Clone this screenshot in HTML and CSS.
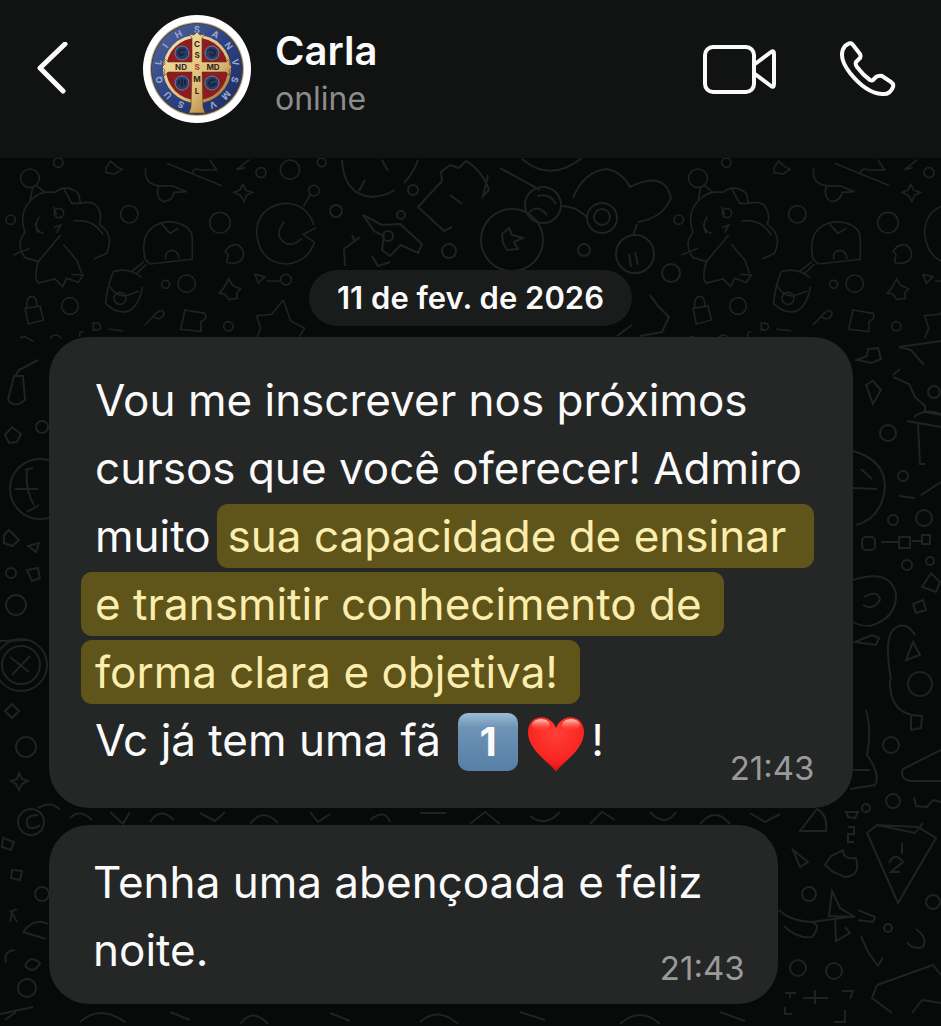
FILE: index.html
```
<!DOCTYPE html>
<html lang="pt-BR">

<head>
    <meta charset="UTF-8">
    <meta name="viewport" content="width=device-width, initial-scale=1.0">
    <title>Carla</title>
    <link rel="stylesheet" href="styles.css">
</head>

<body>

    <!-- header -->
    <header class="topbar">
        <button class="icon-btn back" type="button" aria-label="Voltar">
            <svg width="32" height="54" viewBox="0 0 32 54">
                <path d="M29 2 L4 26 L27 49" />
            </svg>
        </button>

        <svg class="avatar" width="108" height="108" viewBox="0 0 108 108" aria-hidden="true">
            <defs>
                <linearGradient id="gold" x1="0" y1="0" x2="1" y2="1">
                    <stop offset="0" stop-color="#f6e3ae" />
                    <stop offset="0.6" stop-color="#dfbd78" />
                    <stop offset="1" stop-color="#916322" />
                </linearGradient>
                <linearGradient id="blue" x1="0" y1="0" x2="1" y2="1">
                    <stop offset="0" stop-color="#53689f" />
                    <stop offset="0.5" stop-color="#2b4182" />
                    <stop offset="1" stop-color="#1e2b60" />
                </linearGradient>
            </defs>
            <circle cx="54" cy="54" r="54" fill="#fff" />
            <circle cx="54" cy="54" r="47" fill="#c3b698" />
            <circle cx="54" cy="54" r="46" fill="#4b4033" />
            <circle cx="54" cy="54" r="45" fill="url(#blue)" />
            <g class="ring-text">
                <text x="54" y="18">S</text>
                <text x="54" y="18" transform="rotate(28 54 54)">A</text>
                <text x="54" y="18" transform="rotate(54 54 54)">N</text>
                <text x="54" y="18" transform="rotate(80 54 54)">V</text>
                <text x="54" y="18" transform="rotate(106 54 54)">S</text>
                <text x="54" y="18" transform="rotate(132 54 54)">M</text>
                <text x="54" y="18" transform="rotate(156 54 54)">V</text>
                <text x="54" y="18" transform="rotate(204 54 54)">S</text>
                <text x="54" y="18" transform="rotate(228 54 54)">U</text>
                <text x="54" y="18" transform="rotate(254 54 54)">Q</text>
                <text x="54" y="18" transform="rotate(280 54 54)">L</text>
                <text x="54" y="18" transform="rotate(306 54 54)">I</text>
                <text x="54" y="18" transform="rotate(332 54 54)">H</text>
            </g>
            <circle cx="54" cy="54" r="34" fill="url(#gold)" />
            <circle cx="54" cy="54" r="31" fill="#8c1c20" />
            <g fill="#233c68" stroke="#6b80a0" stroke-width="1">
                <circle cx="39" cy="38" r="7" />
                <circle cx="69" cy="38" r="7" />
                <circle cx="39" cy="68" r="7" />
                <circle cx="69" cy="68" r="7" />
            </g>
            <g fill="none" stroke="#1a2338" stroke-width="2">
                <path d="M42 35 Q35 34 36 39 Q38 42 41 38" />
                <path d="M66 35 Q73 34 72 39 Q69 43 67 38" />
                <path d="M36 65 V70 M39 64 V72 M42 65 V70" />
                <path d="M72 65 Q66 64 66 69 Q68 73 72 69 H69" />
            </g>
            <path fill="url(#gold)" stroke="#5b3a1a" stroke-width="0.6" d="M49 23 L46 19 L51 20 L54 17 L57 20 L62 19 L59 23 L59 47 L83 47 L87 43 L86 49 L89 52 L86 55 L87 61 L83 57 L59 57 L60 92 L62 98 L46 98 L48 92 L49 57 L25 57 L21 61 L22 55 L19 52 L22 49 L21 43 L25 47 L49 47 Z" />
            <g class="cross-text">
                <text x="54" y="32">C</text>
                <text x="54" y="43">S</text>
                <text x="54" y="55" class="red">S</text>
                <text x="54" y="67">M</text>
                <text x="54" y="79">L</text>
                <text x="38" y="55">ND</text>
                <text x="70" y="55">MD</text>
            </g>
        </svg>

        <div class="contact">
            <h1>Carla</h1>
            <p>online</p>
        </div>

        <div class="actions">
            <button class="icon-btn" type="button" aria-label="Chamada de vídeo">
                <svg width="74" height="54" viewBox="0 0 74 54">
                    <rect x="2" y="5" width="49" height="45" rx="8" />
                    <path d="M52 22 L68 10 Q71 8 71 12 V42 Q71 46 68 44 L52 32" />
                </svg>
            </button>
            <button class="icon-btn" type="button" aria-label="Chamada de voz">
                <svg width="58" height="58" viewBox="0 0 58 58">
                    <path d="M6 6 L9 4 Q12 2 14 5 L21 14 Q22 16 21 18 L17 22 Q16 24 18 27 Q24 35 31 40 Q33 41 34 40 L37 37 Q40 35 43 36 L52 42 Q55 44 54 47 Q51 55 43 54 Q27 53 11 33 Q-2 16 6 6 Z" />
                </svg>
            </button>
        </div>
    </header>

    <!-- chat -->
    <main class="chat">
        <svg class="doodles" width="100%" height="100%" aria-hidden="true">
            <defs>
                <!-- strip of drawings that repeats across the wallpaper -->
                <g id="strip" stroke-width="5">
                    <circle cx="90" cy="70" r="28" />
                    <circle cx="175" cy="23" r="14" />
                    <circle cx="32" cy="194" r="14" />
                    <circle cx="388" cy="178" r="26" />
                    <circle cx="660" cy="203" r="31" />
                    <circle cx="783" cy="53" r="15" />
                    <circle cx="870" cy="44" r="29" />
                    <circle cx="965" cy="22" r="13" />
                    <circle cx="560" cy="386" r="26" />
                    <circle cx="497" cy="388" r="12" />
                    <circle cx="210" cy="453" r="25" />
                    <circle cx="685" cy="514" r="14" />
                    <path d="M98 98 L90 138 M110 92 L135 112 M90 138 Q120 105 165 112 Q200 85 235 115 L242 145 Q300 130 302 190 L298 208 Q345 240 320 295 L282 312 M90 138 Q55 175 75 232 Q45 270 75 308 L115 320 Q100 370 115 384 L165 372 L188 395 L200 370 L235 382 L250 360 L215 358 M40 300 L90 280 M115 320 L182 240 M190 268 L230 315 L245 355 M220 198 Q280 190 310 240 M118 185 Q100 210 115 235 M160 155 L170 180 M105 205 Q110 230 130 235" />
                    <circle cx="177" cy="174" r="14" />
                    <path d="M162 218 L182 210 L170 234 M190 98 L215 145 L242 145" />
                    <path d="M318 38 L332 18 L350 35 L366 43 L345 57 L318 53 Z" />
                    <path d="M437 40 Q430 85 475 92 Q465 130 492 140 Q520 135 522 112 L560 110 L518 93 L475 92 M500 25 L665 92 M575 58 Q580 35 600 45 L650 45 L630 15" />
                    <path d="M728 88 L738 106 L757 112 L740 120 L732 140 L722 122 L702 112 L720 105 Z" />
                    <path d="M710 44 L748 14 M710 44 L735 38" />
                    <path d="M435 312 Q415 210 505 200 Q575 205 577 250 V313 L450 327 Z M497 313 Q495 286 516 286 Q537 288 536 313 M485 207 L510 235 L535 220" />
                    <path d="M340 350 Q385 335 425 367 M340 350 Q320 400 317 445 Q345 475 380 470 Q415 460 428 395 M330 395 Q350 430 385 420 L418 408 M397 348 L432 320 M410 355 L440 327" />
                    <circle cx="360" cy="430" r="18" />
                    <path d="M75 460 L120 453 L130 495 L85 507 Z M80 458 Q78 425 95 424 Q112 425 110 453" />
                    <path d="M675 290 Q690 265 715 270 Q740 290 725 315 Q705 330 680 322 L684 298 Z" />
                    <path d="M942 210 Q920 143 850 145 Q770 160 770 235 Q780 325 860 327 Q925 320 943 262 L910 238 L948 218 M853 200 Q820 240 855 264 Q880 275 905 250 M910 155 L930 120" />
                    <circle cx="942" cy="107" r="16" />
                    <path d="M686 372 L697 390 L722 402 L710 414 L712 430 L687 434 L675 418 L658 414 L672 398 Z" />
                    <path d="M765 358 L795 365 L775 385 Z M800 378 H840" />
                    <circle cx="858" cy="374" r="16" />
                    <path d="M850 435 L872 498 L914 520 L898 545 M850 435 L815 478 L770 482 L782 520 L770 550" />
                    <path d="M555 465 L615 475 Q625 490 603 500 V530 L542 523 Z M435 510 L465 478 Q490 455 492 478 Q480 500 460 485" />
                    <path d="M280 500 V530 M282 505 Q300 500 302 518 Q295 530 282 522 M325 522 L370 528 M60 548 L75 545 L100 560" />
                    <path d="M240 545 Q235 530 250 530 M150 550 Q165 530 185 550" />
                </g>
            </defs>
            <g transform="translate(0 -158)">
                <use href="#strip" transform="translate(0 155) scale(0.3333)" />
                <use href="#strip" transform="translate(668 155) scale(0.3333)" />

                <!-- top centre -->
                <path d="M342 160 Q344 195 372 197 Q385 196 395 190 M418 160 Q414 172 404 183 M365 180 L359 191 M382 160 L388 171" />
                <circle cx="413" cy="190" r="5" />
                <circle cx="336" cy="211" r="6" />
                <circle cx="449" cy="251" r="7" />
                <circle cx="401" cy="215" r="4" />
                <path d="M442 181 L418 207 L444 231 L452 227 M442 181 L441 172 L450 165 L459 168 L466 161 M450 195 L462 204 M466 161 Q482 170 489 190 L483 196 L488 175" />
                <path d="M363 215 L382 225 L400 224 L422 244 L418 253 L401 245 L390 256 L382 250 L384 236 L374 231 Z M360 237 L344 249 L345 266 M355 242 L352 235 M372 256 L378 266 L390 262" />
                <circle cx="388" cy="236" r="5" />
                <path d="M500 168 L540 190 M522 159 Q550 183 582 158" />
                <circle cx="543" cy="205" r="18" />
                <path d="M529 213 Q537 203 547 215 M537 196 Q550 193 556 204" />
                <circle cx="512" cy="240" r="31" />
                <path d="M502 234 L509 228 L512 235 L523 238 L514 242 L518 249 L507 250 L503 243 Z" />
                <path d="M573 198 Q584 171 607 169 Q622 172 630 187 Q665 170 671 198 Q663 218 638 222 M560 206 Q574 205 587 217" />
                <circle cx="602" cy="218" r="15" />
                <circle cx="602" cy="217" r="8" />
                <circle cx="635" cy="254" r="19" />
                <path d="M629 254 L631 267 M635 252 L638 265 M633 235 L637 224" />
                <circle cx="584" cy="250" r="6" />
                <circle cx="671" cy="273" r="9" />
                <path d="M650 295 L658 306 L669 317 L662 332 L640 336 M632 325 L617 336" />

                <!-- left side -->
                <path d="M8 400 L14 376 L23 376 L25 400 Q15 409 8 400 M15 376 L19 370 L38 360" />
                <path d="M5 435 L12 427 L21 434 L17 442 L9 443 Z" />
                <circle cx="42" cy="427" r="6" />
                <circle cx="40" cy="489" r="30" />
                <path d="M15 489 H38 M27 470 Q25 490 34 505 M25 470 L33 468 M27 512 L39 505" />
                <path d="M4 535 L9 530 L19 540 L12 546 L4 543 Z M28 546 L39 543 L36 552 Z" />
                <circle cx="11" cy="573" r="5" />
                <circle cx="16" cy="605" r="10" />
                <path d="M27 570 L38 568 L40 578 L32 581 Z M0 641 L29 640" />
                <circle cx="21" cy="665" r="26" />
                <circle cx="21" cy="665" r="19" />
                <path d="M10 657 L29 672 M30 656 L12 675" />
                <path d="M12 704 L19 711 L12 718 L5 711 Z" />
                <circle cx="26" cy="747" r="10" />
                <path d="M19 773 L22 779 L28 781 L22 784 L19 790 L16 784 L11 781 L17 779 Z" />
                <circle cx="31" cy="822" r="13" />
                <path d="M38 815 Q23 815 28 827 Q35 830 40 825 M38 808 Q52 800 60 810" />
                <path d="M3 838 L14 842 L11 850 L2 847 Z M12 870 L22 871 L20 880 L11 878 Z" />
                <circle cx="42" cy="894" r="7" />
                <path d="M10 910 L17 922 M10 922 Q12 907 17 910 M23 932 Q34 917 48 924 M23 932 L46 939" />
                <path d="M15 950 Q3 951 6 963 M25 966 Q30 954 40 963 Q34 975 25 966" />
                <circle cx="27" cy="988" r="9" />
                <path d="M0 1014 L33 1007 M5 1020 L16 1012" />

                <!-- right side -->
                <path d="M857 360 L867 356 L868 349 L878 348 L881 359 L872 363 Z M866 385 L873 381 L881 390 L873 404 Z" />
                <circle cx="888" cy="433" r="8" />
                <path d="M899 347 L941 341 M899 347 L911 350 L924 365 M893 375 L900 369 M893 377 L909 384 L915 397 L925 406 V412 L941 415 M907 421 L941 427 M914 417 Q925 408 941 414 M918 424 L920 464 H925" />
                <circle cx="934" cy="392" r="6" />
                <path d="M853 451 Q885 460 885 487 Q882 518 856 525 M853 488 L877 489 M861 469 L872 479" />
                <circle cx="903" cy="476" r="5" />
                <path d="M921 495 L941 482 M899 496 L915 498" />
                <circle cx="924" cy="518" r="8" />
                <circle cx="893" cy="520" r="5" />
                <rect x="862" y="537" width="13" height="13" rx="4" />
                <path d="M881 542 H898 M912 541 H922" />
                <rect x="899" y="537" width="11" height="11" />
                <rect x="922" y="535" width="8" height="9" />
                <circle cx="907" cy="565" r="5" />
                <circle cx="930" cy="561" r="4" />
                <path d="M853 580 Q890 568 896 594 Q897 618 870 626 Q860 626 853 622 M864 597 Q878 589 880 600 Q873 611 863 605" />
                <path d="M922 587 L931 573 L940 582 L936 592 Z M913 604 L923 600 L926 610 L916 613 Z" />
                <path d="M855 642 L872 635 L879 638 L876 645 Z M891 680 Q884 640 893 630 Q905 619 915 635 M906 660 L913 642 L920 655 Z" />
                <circle cx="920" cy="684" r="12" />
                <path d="M890 680 Q889 710 912 715 L922 716 L921 728 L911 730 L911 716" />
                <circle cx="891" cy="745" r="8" />
                <path d="M866 710 Q872 730 867 755 Q881 775 875 785 L850 789 M853 770 H870" />
                <path d="M941 750 L903 769 Q899 780 912 781 L941 781" />
                <circle cx="893" cy="801" r="7" />
                <path d="M914 797 L916 806 L927 807 L933 800 L941 802" />
                <circle cx="866" cy="808" r="4" />
                <path d="M846 812 L858 812 L855 818 L848 817 Z M848 827 H854 V834 H848 V842 H854" />
                <path d="M867 833 L877 825 L918 827 L936 838 L898 903 Z M877 825 L915 833 L923 823 M902 843 V854 M889 863 Q895 851 903 862 L891 872 H900" />
                <path d="M800 831 L817 809 Q828 815 826 831 Z M793 850 L808 862 L800 867 Z" />
                <path d="M843 850 Q843 860 856 858 Q861 876 845 877 L833 872 L825 865 L831 856 Z" />
                <circle cx="809" cy="894" r="7" />
                <circle cx="933" cy="902" r="7" />
                <circle cx="888" cy="928" r="4" />
                <circle cx="834" cy="971" r="8" />
                <circle cx="798" cy="968" r="8" />
                <path d="M779 910 Q790 921 812 922 L848 917 M784 926 Q797 939 812 937 Q822 925 812 922 M832 891 L840 908 L855 917 L829 916 Z M835 918 L836 941 L850 933 L845 927 M858 910 L875 917 L873 922 L858 920" />
                <path d="M861 936 L868 952 L878 966 L883 957 M916 929 Q928 938 923 947 Q912 950 907 942 M877 985 L933 965 L941 975 M877 985 L872 998 L892 1013 M912 1013 L922 1000 L941 1003" />
                <path d="M785 993 H796 M790 993 V998 M803 998 H828 M815 990 V1004 M842 991 L853 991 L850 999 M785 1007 V1014 H792 M834 1022 H845 V1010" />

                <!-- gap between the messages -->
                <path d="M70 818 Q80 808 92 820 M110 812 L123 824 L130 812 M150 822 Q160 806 174 820 M200 813 L215 821 L225 812 M250 824 Q263 807 278 823 M310 812 L318 822 L330 814 M370 820 Q385 808 390 822 M420 813 H446 M470 824 L485 812 L500 824 M530 816 Q545 828 560 812 M590 824 L602 812 L615 820 M650 812 Q665 828 676 812 M700 824 Q715 806 730 824 M750 813 L765 822 L780 814" />
                <path d="M80 1022 Q100 1004 125 1022 M170 1012 L190 1020 M240 1024 Q253 1007 268 1024 M330 1013 L350 1021 M420 1022 Q438 1006 458 1024 M520 1012 L545 1020 M620 1024 Q640 1006 660 1024 M720 1012 L745 1021" />
            </g>
        </svg>

        <time class="date" datetime="2026-02-11">11 de fev. de 2026</time>

        <article class="bubble">
            <p>
                Vou me inscrever nos próximos<br>
                cursos que você oferecer! Admiro<br>
                muito<mark class="inside">sua capacidade de ensinar</mark><br>
                <mark>e transmitir conhecimento de</mark><br>
                <mark>forma clara e objetiva!</mark><br>
                Vc já tem uma fã
                <span class="keycap">1</span><svg class="heart" width="58" height="56" viewBox="0 0 58 56" role="img" aria-label="coração">
                    <defs>
                        <radialGradient id="heartFill" cx="0.5" cy="0.3" r="0.7">
                            <stop offset="0" stop-color="#ff3f35" />
                            <stop offset="0.7" stop-color="#f92521" />
                            <stop offset="1" stop-color="#d80d16" />
                        </radialGradient>
                        <linearGradient id="shine" x1="0" y1="0" x2="0" y2="1">
                            <stop offset="0" stop-color="#ffd0c4" />
                            <stop offset="1" stop-color="#ff4a3d" stop-opacity="0" />
                        </linearGradient>
                    </defs>
                    <path fill="url(#heartFill)" d="M29 56 C25 48 1 35 1 16 C1 -2 23 -4 29 12 C35 -4 57 -2 57 16 C57 35 33 48 29 56 Z" />
                    <ellipse cx="14" cy="9" rx="9" ry="6" fill="url(#shine)" />
                    <ellipse cx="44" cy="9" rx="9" ry="6" fill="url(#shine)" />
                </svg>!
            </p>
            <time class="time" datetime="21:43">21:43</time>
        </article>

        <article class="bubble short">
            <p>
                Tenha uma abençoada e feliz<br>
                noite.
            </p>
            <time class="time" datetime="21:43">21:43</time>
        </article>
    </main>

</body>

</html>
```
FILE: styles.css
```
* {
    box-sizing: border-box;
}

body {
    margin: 0;
    min-height: 100vh;
    display: flex;
    flex-direction: column;
    background: #080909;
    color: #fafafa;
    font-family: Inter, "Liberation Sans", sans-serif;
}

h1,
p {
    margin: 0;
}

/* header */
.topbar {
    display: flex;
    align-items: center;
    padding: 15px 44px 35px 36px;
    background: #111212;
}

.icon-btn {
    display: flex;
    padding: 0;
    border: none;
    background: none;
    cursor: pointer;
}

.icon-btn svg {
    fill: none;
    stroke: #fafafa;
    stroke-width: 4;
    stroke-linecap: round;
    stroke-linejoin: round;
}

.back svg {
    stroke-width: 5;
}

.avatar {
    margin-left: 75px;
}

.ring-text {
    fill: #9aa7c4;
    font-size: 9px;
    font-weight: bold;
    text-anchor: middle;
}

.cross-text {
    fill: #30271c;
    font-size: 8px;
    font-weight: bold;
    text-anchor: middle;
}

.cross-text .red {
    fill: #a3381f;
}

.contact {
    margin-left: 24px;
    padding-top: 12px;
}

.contact h1 {
    font-size: 40px;
    line-height: 48px;
    font-weight: 600;
}

.contact p {
    color: #8c8c8c;
    font-size: 32px;
    line-height: 48px;
}

.actions {
    display: flex;
    align-items: center;
    gap: 62px;
    margin-left: auto;
}

/* chat */
.chat {
    position: relative;
    flex: 1;
    display: flex;
    flex-direction: column;
    align-items: flex-start;
    padding: 112px 49px 22px;
}

.doodles {
    position: absolute;
    top: 0;
    left: 0;
    fill: none;
    stroke: #212222;
    stroke-width: 2;
}

.date {
    position: relative;
    align-self: center;
    margin-bottom: 11px;
    padding: 0 28px;
    border-radius: 28px;
    background: #1a1b1b;
    font-size: 31px;
    line-height: 56px;
    font-weight: 600;
}

.bubble {
    position: relative;
    display: flex;
    flex-direction: column;
    padding: 29px 39px 20px 46px;
    border-radius: 40px;
    background: #252626;
    font-size: 44px;
    line-height: 68px;
    white-space: nowrap;
}

.short {
    margin-top: 17px;
    padding: 23px 33px 16px 44px;
}

.short p {
    padding-right: 42px;
}

mark {
    display: inline-block;
    margin-left: -14px;
    padding: 0 22px 0 14px;
    border-radius: 11px;
    background: #5f5419;
    color: #fbedae;
    line-height: 64px;
}

mark.inside {
    margin-left: 6px;
    padding: 0 28px 0 11px;
}

.keycap {
    display: inline-block;
    width: 60px;
    margin: 0 9px 0 5px;
    border-radius: 10px;
    background: linear-gradient(#9dbdd6, #6d93b5 25%, #587fa6);
    font-size: 40px;
    line-height: 58px;
    font-weight: 700;
    text-align: center;
}

.heart {
    margin-right: 6px;
    vertical-align: middle;
}

.time {
    align-self: flex-end;
    margin-top: -26px;
    color: #9a9a9a;
    font-size: 33px;
    line-height: 40px;
}

.short .time {
    margin-top: -36px;
}
```
